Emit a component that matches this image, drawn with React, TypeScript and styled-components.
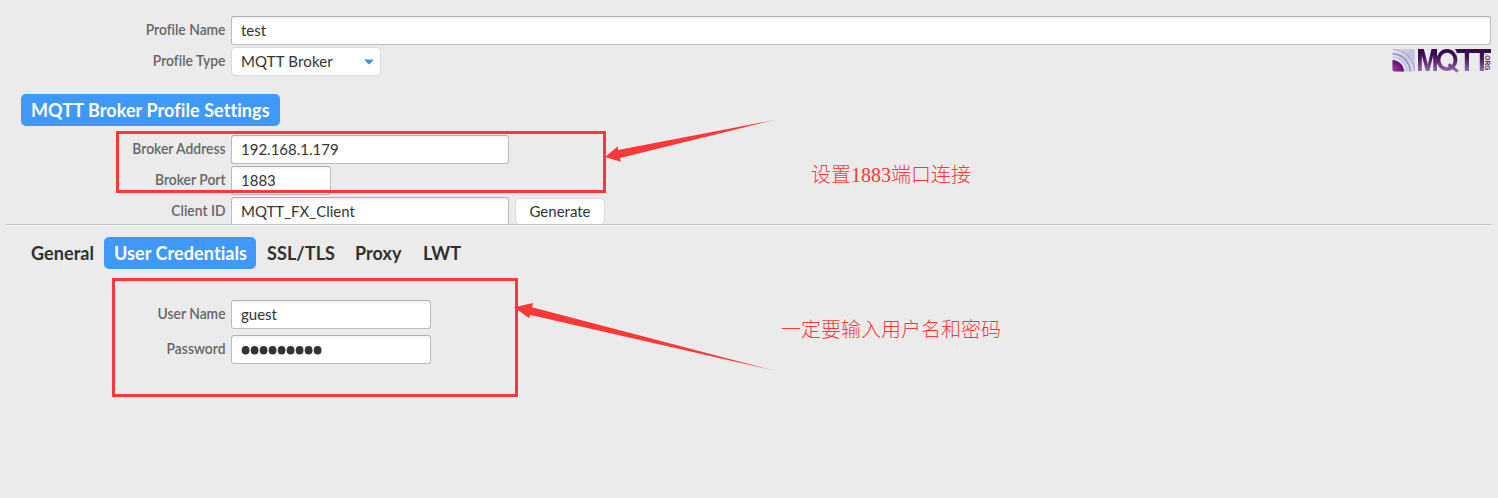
import React from "react";
import styled, { createGlobalStyle } from "styled-components";

const GlobalStyle = createGlobalStyle`
  * { box-sizing: border-box; }
  body { margin: 0; background: #ebebeb; }
`;

const Page = styled.main`
  position: relative;
  width: 1498px;
  height: 498px;
  overflow: hidden;
  background: #ebebeb;
  font-family: Lato, sans-serif;
  font-variant-ligatures: none;
  color: #333;
`;

const ProfilePanel = styled.section`
  height: 224px;
  padding: 16px 7px 0 6px;
  overflow: hidden;
`;

const Divider = styled.div`
  height: 2px;
  margin: 0 7px 0 6px;
  border-top: 1px solid #c0c0c0;
  border-bottom: 1px solid #f7f7f7;
`;

const CredentialsPanel = styled.section`
  padding: 11px 7px 0 6px;
`;

const Row = styled.div<{ $gap?: number }>`
  display: flex;
  align-items: flex-start;
  height: 29px;
  margin-bottom: ${(p) => p.$gap ?? 2}px;
`;

const Label = styled.label`
  width: 219.5px;
  margin-right: 5.5px;
  text-align: right;
  white-space: nowrap;
  font-size: 15px;
  font-weight: 600;
  line-height: 27px;
  color: #666;
  transform: scaleX(0.925);
  transform-origin: right center;
`;

const Field = styled.div<{ $width?: number }>`
  ${(p) => (p.$width ? `width: ${p.$width}px;` : "flex: 1;")}
  height: 29px;
  padding: 0 9px;
  border: 1px solid #bcbcbc;
  border-top-color: #b0b0b0;
  border-radius: 3px;
  background: linear-gradient(#f2f2f2 0, #fff 4px);
  font-size: 15px;
  line-height: 26px;
  white-space: nowrap;
`;

const Select = styled.div`
  display: flex;
  align-items: center;
  justify-content: space-between;
  width: 150px;
  height: 29px;
  padding: 0 6px 0 9px;
  border: 1px solid #d8d8d8;
  border-radius: 4px;
  background: #fff;
  font-size: 15px;
  line-height: 26px;
  letter-spacing: 0.15px;
`;

const SelectText = styled.span`
  height: 27px;
`;

const Button = styled.button`
  width: 90px;
  height: 27px;
  margin: 1px 0 0 6px;
  padding: 0 0 1px;
  border: 1px solid #dadada;
  border-radius: 5px;
  background: #fff;
  color: #333;
  font: 15px Lato, sans-serif;
`;

const LogoSlot = styled.div`
  margin-left: auto;
  padding-top: 1px;
`;

const Tabs = styled.nav`
  display: flex;
  height: 32px;
  margin-left: 15px;
`;

const Tab = styled.div<{ $width: number; $active?: boolean; $pad?: number }>`
  width: ${(p) => p.$width}px;
  padding-left: ${(p) => p.$pad ?? 10}px;
  border-radius: 5px;
  background: ${(p) => (p.$active ? "#3f99fb" : "transparent")};
  color: ${(p) => (p.$active ? "#fff" : "#303030")};
  font-size: 18px;
  font-weight: 700;
  line-height: 32px;
  letter-spacing: 0.08px;
  white-space: nowrap;
`;

const SettingsHeading = styled(Tabs)`
  margin-top: 18px;
  margin-bottom: 9px;
`;

const Credentials = styled.div`
  padding-top: 31px;
`;

const Dots = styled.svg`
  display: block;
  margin-top: 9px;
`;

const Highlight = styled.div<{ $x: number; $y: number; $w: number; $h: number }>`
  position: absolute;
  left: ${(p) => p.$x}px;
  top: ${(p) => p.$y}px;
  width: ${(p) => p.$w}px;
  height: ${(p) => p.$h}px;
  border: 3px solid #fc3838;
`;

const Arrows = styled.svg`
  position: absolute;
  left: 0;
  top: 0;
  pointer-events: none;
`;

const Note = styled.div<{ $x: number; $y: number }>`
  position: absolute;
  left: ${(p) => p.$x}px;
  top: ${(p) => p.$y}px;
  color: #fc3838;
  font-family: "Liberation Serif", "Noto Sans CJK SC", serif;
  font-size: 20px;
  font-weight: 300;
  line-height: 24px;
  white-space: nowrap;
`;

function MqttLogo() {
  return (
    <svg width="101" height="26" viewBox="0 0 101 26" display="block">
      <defs>
        <linearGradient id="ink" x1="0" y1="3" x2="0" y2="24" gradientUnits="userSpaceOnUse">
          <stop offset="0" stopColor="#35094f" />
          <stop offset="0.35" stopColor="#47185f" />
          <stop offset="1" stopColor="#9a72b0" />
        </linearGradient>
        <linearGradient id="tile" x1="0" y1="0" x2="1" y2="1">
          <stop offset="0" stopColor="#e6e6f0" />
          <stop offset="0.5" stopColor="#c0bfde" />
          <stop offset="1" stopColor="#d4d3e6" />
        </linearGradient>
        <radialGradient id="core" cx="2" cy="24" r="12" gradientUnits="userSpaceOnUse">
          <stop offset="0" stopColor="#b23aa4" />
          <stop offset="0.55" stopColor="#8d2387" />
          <stop offset="1" stopColor="#5b1468" />
        </radialGradient>
        <clipPath id="tileClip">
          <rect x="2.5" y="1" width="22.5" height="22.5" rx="2" />
        </clipPath>
      </defs>
      <g clipPath="url(#tileClip)">
        <rect x="2" y="1" width="23" height="23" fill="url(#tile)" />
        <g fill="none">
          <circle cx="2" cy="24" r="22.5" stroke="#a3a2ce" strokeWidth="1.2" />
          <circle cx="2" cy="24" r="21.3" stroke="#ebebf5" strokeWidth="0.8" />
          <circle cx="2" cy="24" r="18" stroke="#8e8cc0" strokeWidth="1.3" />
          <circle cx="2" cy="24" r="16.8" stroke="#e4e4f2" strokeWidth="0.8" />
          <circle cx="2" cy="24" r="13.2" stroke="#e6e4f2" strokeWidth="1.4" />
        </g>
        <circle cx="2" cy="24" r="12" fill="url(#core)" />
      </g>
      <g fill="url(#ink)">
        <path d="M28 23V1H33.8L37.8 16.5L41.5 1H47V23H43.2V7.5L39.4 23H35.8L31.8 7.5V23Z" />
        <path d="M65 1H101V5H94V23H89.8V5H79V23H74.8V5H67Z" />
      </g>
      <g fill="none" stroke="url(#ink)">
        <ellipse cx="57" cy="12" rx="8.5" ry="9.2" strokeWidth="3.8" />
        <path d="M58.5 16.5L68 23.6" strokeWidth="3" />
      </g>
      <text x="0" y="0" transform="translate(95.3 5.5) rotate(90)" fontFamily="Liberation Sans" fontSize="7.6" fontWeight="700" textLength="17" lengthAdjust="spacingAndGlyphs" fill="#53246e">.ORG</text>
    </svg>
  );
}

const passwordDots = Array.from({ length: 9 }, (_, i) => i);

export default function App() {
  return (
    <>
      <GlobalStyle />
      <Page>
        <ProfilePanel>
          <Row>
            <Label>Profile Name</Label>
            <Field>test</Field>
          </Row>
          <Row>
            <Label>Profile Type</Label>
            <Select>
              <SelectText>MQTT Broker</SelectText>
              <svg width="10" height="6" viewBox="0 0 10 6">
                <path d="M0 .5H10L5.5 5.2H4.5Z" fill="#4096dc" />
              </svg>
            </Select>
            <LogoSlot>
              <MqttLogo />
            </LogoSlot>
          </Row>
          <SettingsHeading as="div">
            <Tab $active $width={259}>MQTT Broker Profile Settings</Tab>
          </SettingsHeading>
          <Row>
            <Label>Broker Address</Label>
            <Field $width={278}>192.168.1.179</Field>
          </Row>
          <Row>
            <Label>Broker Port</Label>
            <Field $width={100}>1883</Field>
          </Row>
          <Row>
            <Label>Client ID</Label>
            <Field $width={278}>MQTT_FX_Client</Field>
            <Button>Generate</Button>
          </Row>
        </ProfilePanel>
        <Divider />
        <CredentialsPanel>
          <Tabs>
            <Tab $width={83}>General</Tab>
            <Tab $width={152} $active>User Credentials</Tab>
            <Tab $width={89} $pad={11}>SSL/TLS</Tab>
            <Tab $width={68}>Proxy</Tab>
            <Tab $width={60}>LWT</Tab>
          </Tabs>
          <Credentials>
            <Row $gap={6}>
              <Label>User Name</Label>
              <Field $width={200}>guest</Field>
            </Row>
            <Row>
              <Label>Password</Label>
              <Field $width={200}>
                <Dots width="84" height="12">
                  {passwordDots.map((i) => (
                    <ellipse key={i} cx={4.6 + i * 9} cy="5.2" rx="3.9" ry="4.3" fill="#333" />
                  ))}
                </Dots>
              </Field>
            </Row>
          </Credentials>
        </CredentialsPanel>
        <Highlight $x={116} $y={131} $w={490} $h={62} />
        <Highlight $x={112} $y={278} $w={406} $h={119} />
        <Arrows width="1498" height="498">
          <path d="M605 157L618 146.3L618 150L775 119.9L620 158L620.8 161.8Z" fill="#fc3838" />
          <path d="M514 307.2L533 303L532 307.3L775 370.8L530.5 315L528.8 318Z" fill="#fc3838" />
        </Arrows>
        <Note $x={811} $y={163}>设置1883端口连接</Note>
        <Note $x={781} $y={318}>一定要输入用户名和密码</Note>
      </Page>
    </>
  );
}
